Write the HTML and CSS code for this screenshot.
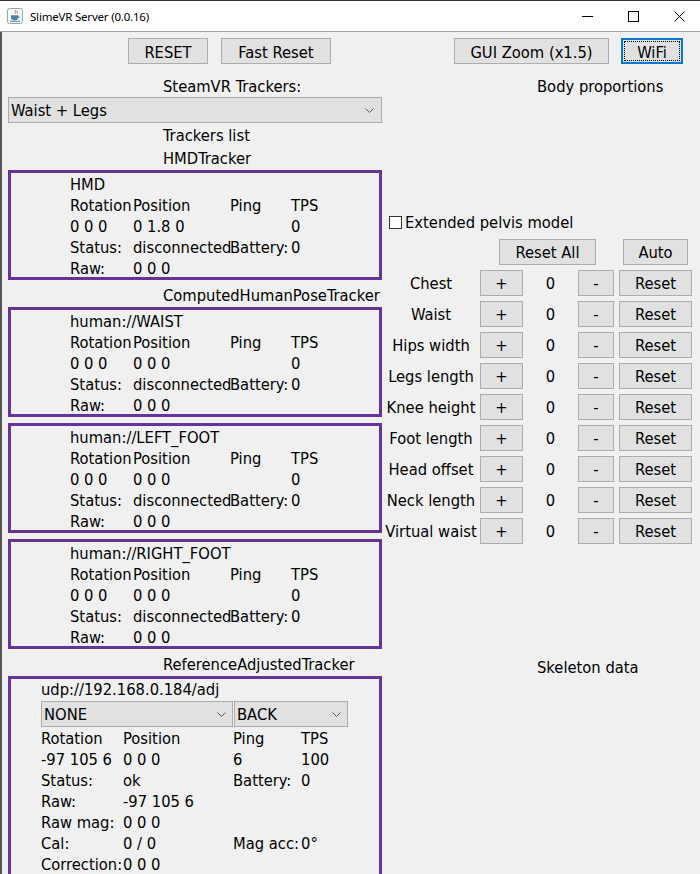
FILE: index.html
```html
<!DOCTYPE html>
<html>
<head>
<meta charset="utf-8">
<title>SlimeVR Server (0.0.16)</title>
<link rel="stylesheet" href="styles.css">
</head>
<body>
<div class="window">
  <header class="titlebar">
    <svg class="app-icon" viewBox="0 0 16 16" width="16" height="16">
      <rect x="0.5" y="0.5" width="15" height="15" rx="2" fill="#f4f7fb" stroke="#8fa6bf"/>
      <path d="M8.5 2.2c1.6 1.1-1.4 1.9 0 3.4M10 3c.9.8-.8 1.3.2 2.3" fill="none" stroke="#e76f00" stroke-width="1"/>
      <path d="M4 7.2h7v2.6c0 1.6-1.4 2.6-3.5 2.6S4 11.4 4 9.8z" fill="#5382a1"/>
      <path d="M11 8.2c1.6 0 1.6 2 0 2" fill="none" stroke="#5382a1" stroke-width="1"/>
      <path d="M3 13.3h10" stroke="#5382a1" stroke-width="1"/>
    </svg>
    <span class="title">SlimeVR Server (0.0.16)</span>
    <div class="controls">
      <span class="ctl"><svg width="11" height="11" viewBox="0 0 11 11"><path d="M0 5.5h11" stroke="#000" stroke-width="1"/></svg></span>
      <span class="ctl"><svg width="11" height="11" viewBox="0 0 11 11"><rect x="0.5" y="0.5" width="10" height="10" fill="none" stroke="#000" stroke-width="1"/></svg></span>
      <span class="ctl"><svg width="11" height="11" viewBox="0 0 11 11"><path d="M0.5 0.5l10 10M10.5 0.5l-10 10" stroke="#000" stroke-width="1"/></svg></span>
    </div>
  </header>

  <main class="content">
    <div class="toolbar">
      <button class="btn btn-reset">RESET</button>
      <button class="btn btn-fast">Fast Reset</button>
      <button class="btn btn-zoom">GUI Zoom (x1.5)</button>
      <button class="btn btn-wifi"><span class="focus">WiFi</span></button>
    </div>

    <div class="columns">
      <section class="left">
        <div class="label">SteamVR Trackers:</div>
        <div class="combo combo-main"><span>Waist + Legs</span><svg class="chev" width="9" height="5" viewBox="0 0 9 5"><path d="M0.5 0.5L4.5 4.5L8.5 0.5" fill="none" stroke="#5a5a5a"/></svg></div>
        <div class="label">Trackers list</div>
        <div class="label">HMDTracker</div>
        <div class="tracker">
          <div class="tgrid">
            <div class="full">HMD</div>
            <div>Rotation</div><div>Position</div><div>Ping</div><div>TPS</div>
            <div>0 0 0</div><div>0 1.8 0</div><div></div><div>0</div>
            <div>Status:</div><div>disconnected</div><div>Battery:</div><div>0</div>
            <div>Raw:</div><div>0 0 0</div>
          </div>
        </div>

        <div class="label group">ComputedHumanPoseTracker</div>
        <div class="tracker">
          <div class="tgrid">
            <div class="full">human://WAIST</div>
            <div>Rotation</div><div>Position</div><div>Ping</div><div>TPS</div>
            <div>0 0 0</div><div>0 0 0</div><div></div><div>0</div>
            <div>Status:</div><div>disconnected</div><div>Battery:</div><div>0</div>
            <div>Raw:</div><div>0 0 0</div>
          </div>
        </div>
        <div class="tracker">
          <div class="tgrid">
            <div class="full">human://LEFT_FOOT</div>
            <div>Rotation</div><div>Position</div><div>Ping</div><div>TPS</div>
            <div>0 0 0</div><div>0 0 0</div><div></div><div>0</div>
            <div>Status:</div><div>disconnected</div><div>Battery:</div><div>0</div>
            <div>Raw:</div><div>0 0 0</div>
          </div>
        </div>
        <div class="tracker">
          <div class="tgrid">
            <div class="full">human://RIGHT_FOOT</div>
            <div>Rotation</div><div>Position</div><div>Ping</div><div>TPS</div>
            <div>0 0 0</div><div>0 0 0</div><div></div><div>0</div>
            <div>Status:</div><div>disconnected</div><div>Battery:</div><div>0</div>
            <div>Raw:</div><div>0 0 0</div>
          </div>
        </div>

        <div class="label group">ReferenceAdjustedTracker</div>
        <div class="tracker tracker-ref">
          <div class="tgrid tgrid-ref">
            <div class="full">udp://192.168.0.184/adj</div>
            <div class="span2 combo-cell"><div class="combo combo-pos"><span>NONE</span><svg class="chev" width="9" height="5" viewBox="0 0 9 5"><path d="M0.5 0.5L4.5 4.5L8.5 0.5" fill="none" stroke="#5a5a5a"/></svg></div></div>
            <div class="span2 combo-cell"><div class="combo combo-mount"><span>BACK</span><svg class="chev" width="9" height="5" viewBox="0 0 9 5"><path d="M0.5 0.5L4.5 4.5L8.5 0.5" fill="none" stroke="#5a5a5a"/></svg></div></div>
            <div>Rotation</div><div>Position</div><div>Ping</div><div>TPS</div>
            <div>-97 105 6</div><div>0 0 0</div><div>6</div><div>100</div>
            <div>Status:</div><div>ok</div><div>Battery:</div><div>0</div>
            <div>Raw:</div><div>-97 105 6</div><div></div><div></div>
            <div>Raw mag:</div><div>0 0 0</div><div></div><div></div>
            <div>Cal:</div><div>0 / 0</div><div>Mag acc:</div><div>0°</div>
            <div>Correction:</div><div>0 0 0</div>
          </div>
        </div>
      </section>

      <section class="right">
        <div class="label">Body proportions</div>
        <div class="check-line"><span class="checkbox"></span><span>Extended pelvis model</span></div>
        <div class="action-row">
          <button class="btn btn-resetall">Reset All</button>
          <button class="btn btn-auto">Auto</button>
        </div>
        <div class="props">
          <div class="prop"><span class="pname">Chest</span><button class="btn plus">+</button><span class="pval">0</span><button class="btn minus">-</button><button class="btn preset">Reset</button></div>
          <div class="prop"><span class="pname">Waist</span><button class="btn plus">+</button><span class="pval">0</span><button class="btn minus">-</button><button class="btn preset">Reset</button></div>
          <div class="prop"><span class="pname">Hips width</span><button class="btn plus">+</button><span class="pval">0</span><button class="btn minus">-</button><button class="btn preset">Reset</button></div>
          <div class="prop"><span class="pname">Legs length</span><button class="btn plus">+</button><span class="pval">0</span><button class="btn minus">-</button><button class="btn preset">Reset</button></div>
          <div class="prop"><span class="pname">Knee height</span><button class="btn plus">+</button><span class="pval">0</span><button class="btn minus">-</button><button class="btn preset">Reset</button></div>
          <div class="prop"><span class="pname">Foot length</span><button class="btn plus">+</button><span class="pval">0</span><button class="btn minus">-</button><button class="btn preset">Reset</button></div>
          <div class="prop"><span class="pname">Head offset</span><button class="btn plus">+</button><span class="pval">0</span><button class="btn minus">-</button><button class="btn preset">Reset</button></div>
          <div class="prop"><span class="pname">Neck length</span><button class="btn plus">+</button><span class="pval">0</span><button class="btn minus">-</button><button class="btn preset">Reset</button></div>
          <div class="prop"><span class="pname">Virtual waist</span><button class="btn plus">+</button><span class="pval">0</span><button class="btn minus">-</button><button class="btn preset">Reset</button></div>
        </div>
        <div class="label skeleton">Skeleton data</div>
      </section>
    </div>
  </main>
</div>
</body>
</html>
```

FILE: styles.css
```css
* { box-sizing: border-box; }
html, body { margin: 0; padding: 0; }
body {
  width: 700px;
  height: 874px;
  overflow: hidden;
  background: #f0f0f0;
  font-family: "DejaVu Sans Condensed", "DejaVu Sans", sans-serif;
  font-stretch: condensed;
  font-size: 16.4px;
  color: #000;
}
.window {
  width: 700px;
  height: 874px;
  display: flex;
  flex-direction: column;
}

/* title bar */
.titlebar {
  height: 32px;
  flex: none;
  background: #fff;
  border-top: 1px solid #333;
  border-bottom: 1px solid #a3a3a3;
  display: flex;
  align-items: center;
  font-family: "Noto Sans", sans-serif;
  font-stretch: normal;
  font-size: 11.5px;
  letter-spacing: -0.2px;
}
.app-icon { margin-left: 7px; margin-right: 7px; flex: none; }
.title { flex: 1; white-space: nowrap; }
.controls { display: flex; height: 100%; margin-right: -2px; }
.ctl { width: 46px; display: flex; align-items: center; justify-content: center; }

/* content */
.content {
  flex: 1;
  border-left: 2px solid #555;
  overflow: hidden;
}
.toolbar {
  display: flex;
  padding-top: 6px;
  padding-left: 126px;
}
.btn {
  font: inherit;
  font-stretch: condensed;
  height: 26px;
  background: #e1e1e1;
  border: 1px solid #adadad;
  border-radius: 0;
  padding: 0;
  color: #000;
  white-space: nowrap;
}
.toolbar .btn { padding-top: 2px; }
.btn-reset { width: 80px; }
.btn-fast { width: 110px; margin-left: 13px; }
.btn-zoom { width: 155px; margin-left: 123px; }
.toolbar .btn-wifi {
  width: 62px;
  margin-left: 12px;
  border: 2px solid #0078d7;
  padding: 1px;
  display: flex;
}
.btn-wifi .focus {
  flex: 1;
  border: 1px dotted #000;
  display: flex;
  align-items: center;
  justify-content: center;
  padding-top: 2px;
}

.columns {
  display: flex;
  padding-left: 6px;
  padding-top: 10px;
}
.left { width: 374px; flex: none; }
.right { width: 308px; flex: none; margin-left: 2px; }

.label {
  height: 23px;
  padding-top: 3px;
  line-height: 20px;
  padding-left: 155px;
  white-space: nowrap;
}
.label.group { margin-top: 3px; }

.combo {
  height: 26px;
  background: #e1e1e1;
  border: 1px solid #adadad;
  display: flex;
  align-items: center;
  justify-content: space-between;
  padding: 0 6px 0 2px;
  white-space: nowrap;
}
.chev { flex: none; }
.combo-main .chev { margin-right: 1px; }

.tracker {
  height: 110px;
  border: 3px solid #663399;
  margin-top: 6px;
}
.label + .tracker { margin-top: 1px; }
.tgrid {
  display: grid;
  grid-template-columns: 63px 97px 61px auto;
  padding-left: 59px;
  padding-top: 1px;
  line-height: 21px;
  white-space: nowrap;
}
.tgrid .full { grid-column: 1 / -1; }
.tracker-ref { height: 240px; }
.tgrid-ref {
  grid-template-columns: 82px 110px 68px auto;
  padding-left: 30px;
  padding-top: 0;
}
.combo-cell { grid-column: span 2; height: 28px; padding-top: 1px; }
.combo-pos { width: 192px; }
.combo-mount { width: 114px; margin-left: 1px; }

/* right */
.right .label { padding-left: 153px; }
.check-line {
  margin-top: 114px;
  height: 23px;
  display: flex;
  align-items: center;
  padding-left: 5px;
  white-space: nowrap;
}
.checkbox {
  width: 13px;
  height: 13px;
  border: 1px solid #333;
  background: #fff;
  margin-right: 3px;
}
.action-row {
  display: flex;
  margin-top: 5px;
}
.btn-resetall { width: 97px; margin-left: 115px; }
.btn-auto { width: 65px; margin-left: 27px; }
.props { display: flex; flex-direction: column; }
.prop {
  display: grid;
  grid-template-columns: 94px 45px 55px 36px 78px;
  align-items: center;
  margin-top: 5px;
  height: 26px;
}
.pname { text-align: center; white-space: nowrap; }
.pval { text-align: center; }
.plus { width: 43px; margin-left: 2px; }
.minus { width: 36px; }
.preset { width: 73px; margin-left: 5px; }
.label.skeleton { margin-top: 111px; }
```
